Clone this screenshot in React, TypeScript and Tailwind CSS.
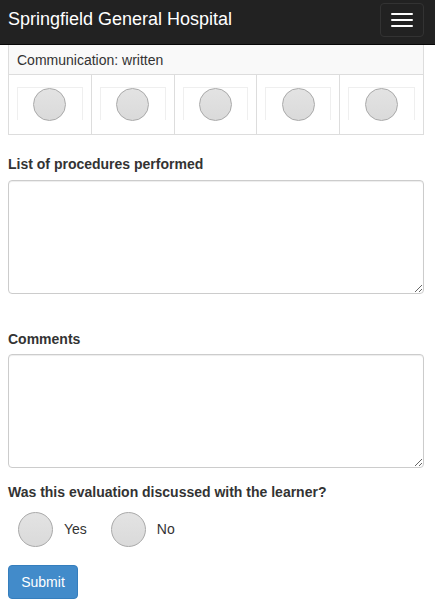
import React from 'react';

const font = { fontFamily: '"Liberation Sans", Arial, sans-serif' };

function Radio({ size }: { size: 'sm' | 'lg' }) {
  return (
    <span
      className={
        'block shrink-0 rounded-full border border-[#a9a9a9] bg-[linear-gradient(#e3e3e3,#dadada)] ' +
        (size === 'sm' ? 'h-[33px] w-[33px]' : 'h-[35px] w-[35px]')
      }
    />
  );
}

function RatingCell() {
  return (
    <div className="h-[59px] px-[8px] pt-[12px]">
      <div className="flex h-[33px] justify-center border border-b-0 border-[#efefef]">
        <Radio size="sm" />
      </div>
    </div>
  );
}

export default function App() {
  return (
    <div className="min-h-[608px] w-[435px] bg-white text-[14px] text-[#333]" style={font}>
      {/* Navbar */}
      <nav className="flex h-[45px] items-start justify-between border-b border-[#080808] bg-[#222] pl-[8px] pr-[11px]">
        <span className="mt-[8px] text-[18px] leading-[22px] text-white">Springfield General Hospital</span>
        <button
          type="button"
          className="mt-[3px] flex h-[34px] w-[44px] flex-col items-center justify-center gap-[4px] rounded-[4px] border border-[#333]"
        >
          <span className="block h-[2px] w-[22px] rounded-[1px] bg-white" />
          <span className="block h-[2px] w-[22px] rounded-[1px] bg-white" />
          <span className="block h-[2px] w-[22px] rounded-[1px] bg-white" />
        </button>
      </nav>

      <div className="px-[8px]">
        {/* Rating table */}
        <div className="w-[416px] border border-t-0 border-[#ddd]">
          <div className="flex h-[30px] items-center border-b border-[#ddd] bg-[#f9f9f9] pl-[8px] pt-[1px]">
            Communication: written
          </div>
          <div className="grid grid-cols-5 divide-x divide-[#ddd]">
            <RatingCell />
            <RatingCell />
            <RatingCell />
            <RatingCell />
            <RatingCell />
          </div>
        </div>

        {/* Procedures */}
        <label className="mt-[19px] mb-[6px] block font-bold leading-[20px]">List of procedures performed</label>
        <textarea className="block h-[114px] w-[416px] rounded-[4px] border border-[#ccc] shadow-[inset_0_1px_1px_rgba(0,0,0,0.075)]" />

        {/* Comments */}
        <label className="mt-[35px] mb-[5px] block font-bold leading-[20px]">Comments</label>
        <textarea className="block h-[114px] w-[416px] rounded-[4px] border border-[#ccc] shadow-[inset_0_1px_1px_rgba(0,0,0,0.075)]" />

        {/* Discussed */}
        <label className="mt-[14px] block font-bold leading-[20px]">Was this evaluation discussed with the learner?</label>
        <div className="mt-[10px] flex items-center pl-[10px]">
          <Radio size="lg" />
          <span className="ml-[11px]">Yes</span>
          <span className="ml-[24px]">
            <Radio size="lg" />
          </span>
          <span className="ml-[11px]">No</span>
        </div>

        <button
          type="button"
          className="mt-[18px] h-[34px] w-[70px] rounded-[4px] border border-[#357ebd] bg-[#428bca] text-white"
        >
          Submit
        </button>
      </div>
    </div>
  );
}
